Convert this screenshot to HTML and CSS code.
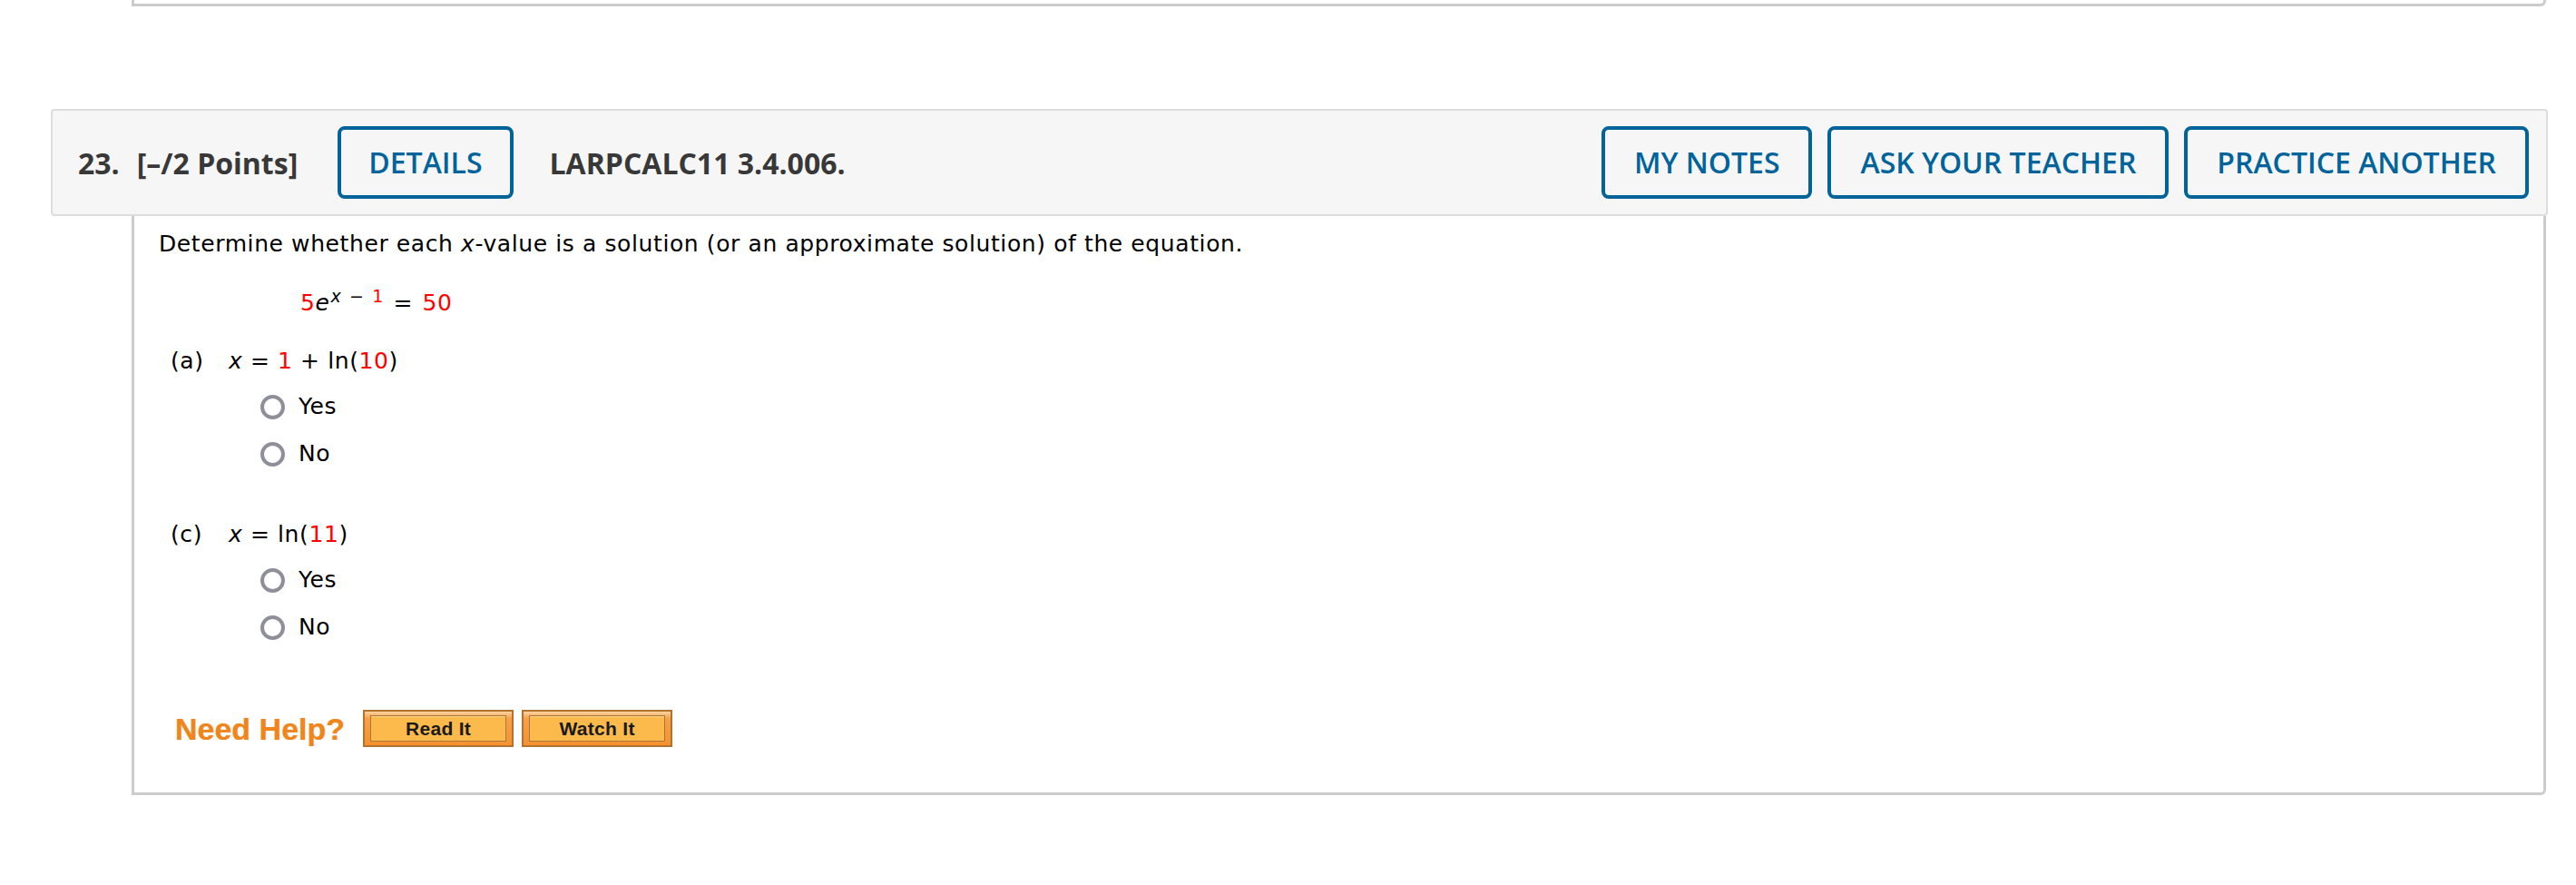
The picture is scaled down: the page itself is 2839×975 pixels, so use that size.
FILE: index.html
```html
<!DOCTYPE html>
<html lang="en">
<head>
<meta charset="utf-8">
<title>Question 23</title>
<link rel="stylesheet" href="styles.css">
</head>
<body>
<div class="prev"></div>
<div class="question">
  <div class="qhead">
    <span class="qnum">23.</span>
    <span class="qpts">[–/2 Points]</span>
    <button class="btn btn-details">DETAILS</button>
    <span class="qid">LARPCALC11 3.4.006.</span>
    <div class="actions">
      <button class="btn">MY NOTES</button>
      <button class="btn">ASK YOUR TEACHER</button>
      <button class="btn">PRACTICE ANOTHER</button>
    </div>
  </div>
  <div class="qbody">
    <p class="prompt">Determine whether each <i>x</i>-value is a solution (or an approximate solution) of the equation.</p>
    <p class="eq"><span class="red">5</span><i>e</i><sup><i>x</i> − <span class="red">1</span></sup> = <span class="red">50</span></p>
    <div class="part">
      <div class="plabel"><span class="pl">(a)</span><i>x</i> = <span class="red">1</span> + ln(<span class="red">10</span>)</div>
      <label class="opt"><span class="radio"></span>Yes</label>
      <label class="opt"><span class="radio"></span>No</label>
    </div>
    <div class="part part-c">
      <div class="plabel"><span class="pl">(c)</span><i>x</i> = ln(<span class="red">11</span>)</div>
      <label class="opt"><span class="radio"></span>Yes</label>
      <label class="opt"><span class="radio"></span>No</label>
    </div>
    <div class="help">
      <span class="need">Need Help?</span>
      <span class="hbtn"><span class="hin">Read It</span></span>
      <span class="hbtn"><span class="hin">Watch It</span></span>
    </div>
  </div>
</div>
</body>
</html>
```

FILE: styles.css
```css
html, body {
  margin: 0;
  padding: 0;
  background: #ffffff;
}

.prev {
  box-sizing: border-box;
  margin-left: 145px;
  width: 2661px;
  height: 7px;
  border: 3px solid #cccccc;
  border-top: none;
  border-radius: 0 0 6px 0;
}

.question {
  margin-top: 113px;
}

.qhead {
  box-sizing: border-box;
  margin-left: 56px;
  width: 2752px;
  height: 118px;
  border: 2px solid #dddddd;
  border-radius: 4px;
  background: #f6f6f6;
  display: flex;
  align-items: center;
  padding: 0 19px 0 28px;
  font-family: "Open Sans", "DejaVu Sans", sans-serif;
  font-size: 32px;
  color: #383838;
}

.qnum, .qpts, .qid {
  font-weight: 700;
}

.qnum {
  margin-right: 19px;
}

.qpts {
  margin-right: 44px;
}

.qid {
  margin-left: 40px;
}

.btn {
  box-sizing: border-box;
  height: 80px;
  padding: 0 30px;
  border: 4px solid #00649b;
  border-radius: 8px;
  background: transparent;
  color: #00649b;
  font-family: "Open Sans", "DejaVu Sans", sans-serif;
  font-weight: 600;
  font-size: 32px;
  line-height: 1;
  cursor: pointer;
}

.actions {
  margin-left: auto;
  display: flex;
  gap: 17px;
}

.actions .btn {
  padding: 0 32px;
}

.qbody {
  box-sizing: border-box;
  margin-left: 145px;
  width: 2661px;
  border: 3px solid #cccccc;
  border-top: none;
  border-radius: 0 0 6px 0;
  padding: 16px 0 50px 27px;
  font-family: "DejaVu Sans", Verdana, sans-serif;
  font-size: 25px;
  letter-spacing: 0.6px;
  line-height: 30px;
  color: #000000;
}

.qbody p {
  margin: 0;
}

.red {
  color: #ff0000;
}

.eq {
  margin-top: 35px !important;
  margin-left: 156px !important;
  word-spacing: 2px;
}

.eq sup {
  font-size: 19px;
  line-height: 0;
  vertical-align: 9px;
  margin-left: 1px;
}

.part {
  margin-top: 34px;
  margin-left: 13px;
}

.part-c {
  margin-top: 59px;
}

.plabel {
  display: flex;
  white-space: pre;
}

.pl {
  display: inline-block;
  width: 64px;
}

.opt {
  display: flex;
  align-items: center;
  gap: 15px;
  margin-left: 99px;
  margin-top: 20px;
  height: 30px;
}

.opt + .opt {
  margin-top: 22px;
}

.radio {
  box-sizing: border-box;
  width: 27px;
  height: 27px;
  border: 4px solid #8f8f9b;
  border-radius: 50%;
  background: #ffffff;
  flex: none;
}

.help {
  display: flex;
  align-items: center;
  margin-top: 76px;
  margin-left: 18px;
  height: 41px;
  letter-spacing: 0;
}

.need {
  font-family: "Liberation Sans", Arial, sans-serif;
  font-weight: 700;
  font-size: 34px;
  color: #f0851d;
  text-shadow: 0 0 1px rgba(240, 133, 29, 0.6);
  margin-right: 20px;
}

.hbtn {
  box-sizing: border-box;
  width: 166px;
  height: 41px;
  padding: 4px 6px;
  border: 2px solid #b5722f;
  background: linear-gradient(#fbd3a0 0%, #f7a04a 20%, #f5922f 100%);
  display: flex;
  margin-right: 9px;
}

.hin {
  flex: 1;
  display: flex;
  align-items: center;
  justify-content: center;
  border: 1px solid #a8763a;
  background: #fcb94c;
  box-shadow: inset 0 1px 0 #fdd48a;
  font-family: "Liberation Sans", Arial, sans-serif;
  font-weight: 700;
  font-size: 21px;
  letter-spacing: 0.3px;
  color: #1a1a1a;
}
```
